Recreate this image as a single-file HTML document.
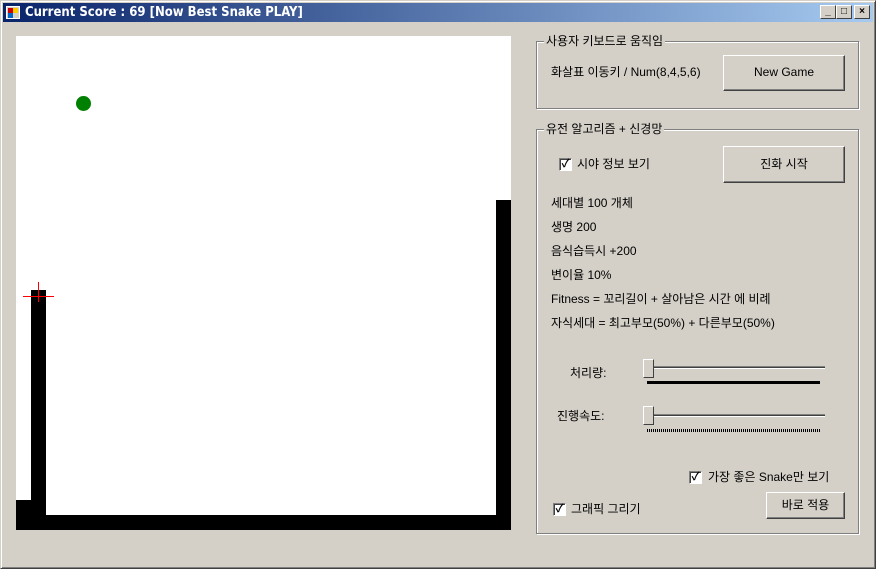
<!DOCTYPE html>
<html><head><meta charset="utf-8"><style>
*{margin:0;padding:0;box-sizing:border-box}
body{width:876px;height:569px;background:#d4d0c8;position:relative;overflow:hidden;font-family:"Liberation Sans","Noto Sans CJK KR","NanumGothic",sans-serif;font-size:12px;color:#000}
.a{position:absolute}
span.a{line-height:14px}
#win{left:0;top:0;width:876px;height:569px;border:1px solid;border-color:#d4d0c8 #404040 #404040 #d4d0c8;box-shadow:inset 1px 1px #fff,inset -1px -1px #808080}
#title{left:3px;top:3px;width:870px;height:19px;background:linear-gradient(90deg,#0a246a,#a6caf0);color:#fff;font-weight:bold;font-size:13px;line-height:19px;padding-left:22px;font-family:"DejaVu Sans Condensed","Liberation Sans",sans-serif}
.tb{top:5px;width:16px;height:14px;background:#d4d0c8;border:1px solid;border-color:#fff #404040 #404040 #fff;font-size:10px;line-height:11px;text-align:center;color:#000;font-weight:bold}
.grp{border:1px solid #808080;box-shadow:1px 1px #fff,inset 1px 1px #fff}
.lg{background:#d4d0c8;padding:0 2px;top:-8px;left:7px}
.btn{background:#d4d0c8;border:1px solid;border-color:#fff #404040 #404040 #fff;box-shadow:inset -1px -1px #808080;text-align:center}
.cb{width:13px;height:13px;background:#fff;border:1px solid;border-color:#808080 #fff #fff #808080;box-shadow:inset 1px 1px #404040;font-size:11px;line-height:11px;text-align:center;font-weight:bold}
.blk{background:#000}
</style></head><body>
<div id="win" class="a"></div>
<div id="title" class="a">Current Score : 69 [Now Best Snake PLAY]</div>
<div class="a" style="left:6px;top:6px;width:14px;height:13px;background:#d4d0c8;border:1px solid #fff"><div class="a" style="left:1px;top:1px;width:5px;height:5px;background:#c00"></div><div class="a" style="left:6px;top:1px;width:5px;height:5px;background:#fc0"></div><div class="a" style="left:1px;top:6px;width:5px;height:5px;background:#06c"></div></div>
<div class="a tb" style="left:820px">_</div>
<div class="a tb" style="left:836px">□</div>
<div class="a tb" style="left:854px">×</div>

<div class="a" style="left:16px;top:36px;width:495px;height:494px;background:#fff">
 <div class="a" style="left:60px;top:60px;width:15px;height:15px;border-radius:50%;background:#008000"></div>
 <div class="a blk" style="left:15px;top:254px;width:15px;height:240px"></div>
 <div class="a blk" style="left:0;top:479px;width:495px;height:15px"></div>
 <div class="a blk" style="left:0;top:464px;width:15px;height:15px"></div>
 <div class="a blk" style="left:480px;top:164px;width:15px;height:330px"></div>
 <div class="a" style="left:7px;top:260px;width:31px;height:1px;background:#f00"></div>
 <div class="a" style="left:22px;top:246px;width:1px;height:20px;background:#f00"></div>
</div>

<div class="a grp" style="left:536px;top:41px;width:323px;height:68px"><span class="a lg">사용자 키보드로 움직임</span>
 <span class="a" style="left:14px;top:23px">화살표 이동키 / Num(8,4,5,6)</span>
 <div class="a btn" style="left:186px;top:13px;width:122px;height:36px;line-height:33px">New Game</div>
</div>

<div class="a grp" style="left:536px;top:129px;width:323px;height:405px"><span class="a lg">유전 알고리즘 + 신경망</span>
 <div class="a cb" style="left:22px;top:28px">✓</div><span class="a" style="left:40px;top:27px">시야 정보 보기</span>
 <div class="a btn" style="left:186px;top:16px;width:122px;height:37px;line-height:34px">진화 시작</div>
 <span class="a" style="left:14px;top:66px">세대별 100 개체</span>
 <span class="a" style="left:14px;top:90px">생명 200</span>
 <span class="a" style="left:14px;top:114px">음식습득시 +200</span>
 <span class="a" style="left:14px;top:138px">변이율 10%</span>
 <span class="a" style="left:14px;top:162px">Fitness = 꼬리길이 + 살아남은 시간 에 비례</span>
 <span class="a" style="left:14px;top:186px">자식세대 = 최고부모(50%) + 다른부모(50%)</span>
 <span class="a" style="left:33px;top:236px">처리량:</span>
 <div class="a" style="left:110px;top:236px;width:178px;height:3px;border-top:1px solid #808080;border-bottom:1px solid #fff;background:#404040"></div>
 <div class="a" style="left:106px;top:229px;width:11px;height:19px;background:#d4d0c8;border:1px solid;border-color:#fff #404040 #404040 #fff"></div>
 <div class="a" style="left:110px;top:251px;width:173px;height:3px;background:#000"></div>
 <span class="a" style="left:20px;top:279px">진행속도:</span>
 <div class="a" style="left:110px;top:284px;width:178px;height:3px;border-top:1px solid #808080;border-bottom:1px solid #fff;background:#404040"></div>
 <div class="a" style="left:106px;top:276px;width:11px;height:19px;background:#d4d0c8;border:1px solid;border-color:#fff #404040 #404040 #fff"></div>
 <div class="a" style="left:110px;top:299px;width:173px;height:3px;background:repeating-linear-gradient(90deg,#000 0 1px,transparent 1px 2px)"></div>
 <div class="a cb" style="left:152px;top:341px">✓</div><span class="a" style="left:171px;top:340px">가장 좋은 Snake만 보기</span>
 <div class="a btn" style="left:229px;top:362px;width:79px;height:27px;line-height:24px">바로 적용</div>
 <div class="a cb" style="left:16px;top:373px">✓</div><span class="a" style="left:34px;top:372px">그래픽 그리기</span>
</div>
</body></html>
